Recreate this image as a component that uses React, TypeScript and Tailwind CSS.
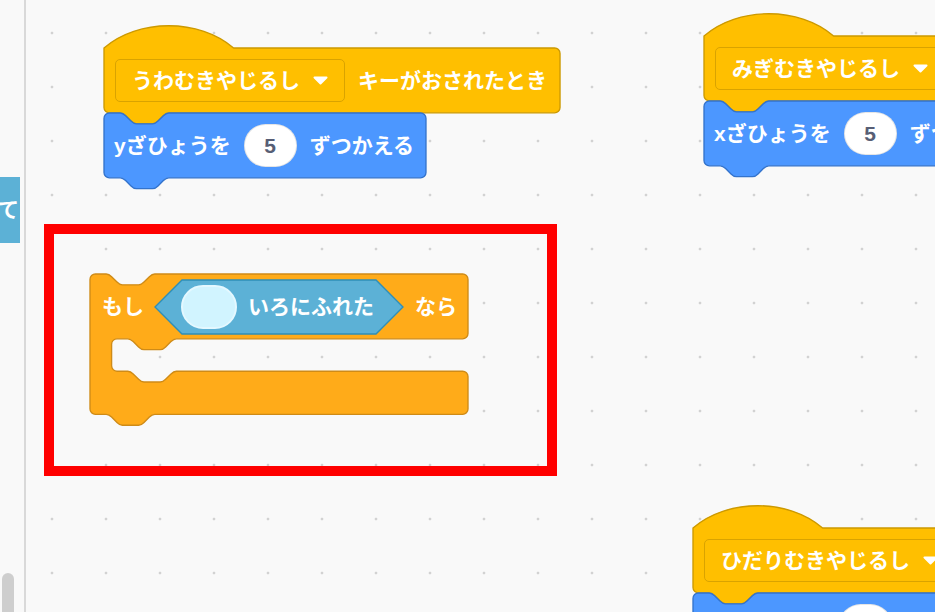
import React from "react";

// scratch-blocks shapes, drawn in block units and scaled up
const S = 1.35;
const NOTCH_R =
  "c 2,0 3,1 4,2 l 4,4 c 1,1 2,2 4,2 h 12 c 2,0 3,-1 4,-2 l 4,-4 c 1,-1 2,-2 4,-2";
const NOTCH_L =
  "c -2,0 -3,1 -4,2 l -4,4 c -1,1 -2,2 -4,2 h -12 c -2,0 -3,-1 -4,-2 l -4,-4 c -1,-1 -2,-2 -4,-2";

const stackPath = (w: number, h: number) =>
  `M 0,4 a 4,4 0 0,1 4,-4 H 12 ${NOTCH_R} H ${w - 4} a 4,4 0 0,1 4,4 V ${h - 4} a 4,4 0 0,1 -4,4 H 48 ${NOTCH_L} H 4 a 4,4 0 0,1 -4,-4 z`;

const hatPath = (w: number, h: number) =>
  `M 0,0 c 25,-22 71,-22 96,0 H ${w - 4} a 4,4 0 0,1 4,4 V ${h - 4} a 4,4 0 0,1 -4,4 H 48 ${NOTCH_L} H 4 a 4,4 0 0,1 -4,-4 z`;

const ifPath = (w: number) =>
  `M 0,4 a 4,4 0 0,1 4,-4 H 12 ${NOTCH_R} H ${w - 4} a 4,4 0 0,1 4,4 V 44 a 4,4 0 0,1 -4,4 H 64 ${NOTCH_L} H 20 a 4,4 0 0,0 -4,4 V 68 a 4,4 0 0,0 4,4 H 28 ${NOTCH_R} H ${w - 4} a 4,4 0 0,1 4,4 V 100 a 4,4 0 0,1 -4,4 H 48 ${NOTCH_L} H 4 a 4,4 0 0,1 -4,-4 z`;

const hexPath = (w: number) =>
  `M 0,20 L 20,0 H ${w - 20} L ${w},20 L ${w - 20},40 H 20 z`;

const Shape = ({ d, fill, stroke }: { d: string; fill: string; stroke: string }) => (
  <svg className="absolute left-0 top-0 overflow-visible" width={1} height={1}>
    <path transform={`scale(${S})`} d={d} fill={fill} stroke={stroke} strokeWidth={1} />
  </svg>
);

const Arrow = () => (
  <svg width="15" height="9" viewBox="0 0 15 9">
    <path d="M1.5 1.5 H13.5 L7.5 7.5 Z" fill="#fff" stroke="#fff" strokeWidth="2" strokeLinejoin="round" />
  </svg>
);

const Dropdown = ({ label }: { label: string }) => (
  <div className="relative flex h-[43px] items-center gap-[13px] whitespace-nowrap rounded-[5px] border border-[#d9a300] bg-[#ffbf00] pl-[16px] pr-[16px]">
    <span>{label}</span>
    <Arrow />
  </div>
);

const Hat = ({ label, units }: { label: string; units: number }) => (
  <div className="relative flex h-[65px] items-center whitespace-nowrap pl-[11px]" style={{ width: units * S }}>
    <Shape d={hatPath(units, 48)} fill="#ffbf00" stroke="#cc9900" />
    <Dropdown label={label} />
    <span className="relative ml-[13px]">キーがおされたとき</span>
  </div>
);

const ChangeBy = ({ axis, gap }: { axis: string; gap: string }) => (
  <div className="relative flex h-[65px] w-[322px] items-center whitespace-nowrap pl-[10px]">
    <Shape d={stackPath(238.5, 48)} fill="#4c97ff" stroke="#3373cc" />
    <span className="relative">{axis}ざひょうを</span>
    <div className={`relative flex h-[43px] w-[53px] items-center justify-center rounded-full border border-black/10 bg-white font-bold text-[#575e75] ${gap}`}>
      5
    </div>
    <span className="relative ml-[13px]">ずつかえる</span>
  </div>
);

const App = () => {
  return (
    <div className="flex h-[612px] w-[935px] overflow-hidden bg-[#f9f9f9] font-['Liberation_Sans','Noto_Sans_CJK_JP',sans-serif] text-[21px] font-semibold text-white">
      {/* category strip */}
      <div className="flex w-[26px] shrink-0 flex-col border-r-2 border-[#d9d9d9]">
        <div className="mt-[177px] flex h-[66px] w-[20px] items-center justify-end overflow-hidden bg-[#5cb1d6]">
          <span className="whitespace-nowrap pr-[1px]">すべて</span>
        </div>
        <div className="ml-[2px] mt-auto h-[39px] w-[12px] rounded-t-[6px] bg-[#cecece]" />
      </div>

      {/* workspace */}
      <div className="relative flex-1 overflow-hidden bg-[radial-gradient(circle,#d2d2d2_1.1px,transparent_1.7px)] bg-[length:54px_54px] bg-[position:-1px_6px]">
        <div className="absolute left-[78px] top-[48px]">
          <Hat label="うわむきやじるし" units={337.8} />
          <ChangeBy axis="y" gap="ml-[13px]" />
        </div>

        <div className="absolute left-[678px] top-[36px]">
          <Hat label="みぎむきやじるし" units={337.8} />
          <ChangeBy axis="x" gap="ml-[13px]" />
        </div>

        <div className="absolute left-[667px] top-[528px]">
          <Hat label="ひだりむきやじるし" units={360} />
          <ChangeBy axis="x" gap="ml-[19px]" />
        </div>

        <div className="absolute left-[64px] top-[274px]">
          <div className="relative h-[141px] w-[378px]">
            <Shape d={ifPath(280)} fill="#ffab19" stroke="#cf8b17" />
            <div className="relative flex h-[65px] items-center whitespace-nowrap pl-[12px]">
              <span>もし</span>
              <div className="relative ml-[11px] flex h-[54px] w-[248px] items-center pl-[26px]">
                <Shape d={hexPath(183.7)} fill="#5cb1d6" stroke="#2e8eb8" />
                <div className="relative h-[44px] w-[56px] rounded-full border-2 border-[#e4f8ff] bg-[#d1f4ff]" />
                <span className="relative ml-[11px]">いろにふれた</span>
              </div>
              <span className="ml-[12px]">なら</span>
            </div>
          </div>
        </div>

        <div className="absolute left-[18px] top-[224px] h-[252px] w-[513px] border-[10px] border-[#ff0000]" />
      </div>
    </div>
  );
};

export default App;
